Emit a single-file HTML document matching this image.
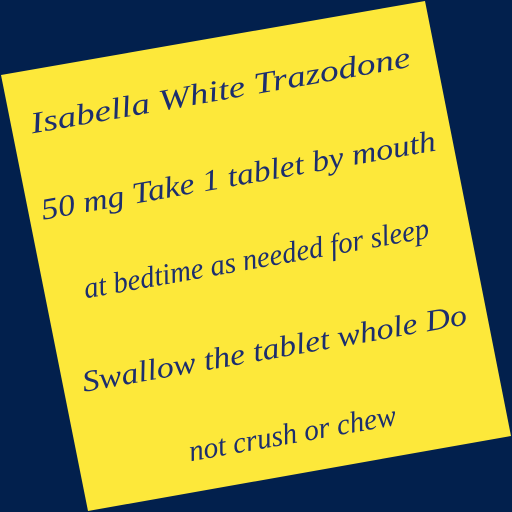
<!DOCTYPE html>
<html><head><style>html,body{margin:0;padding:0;background:#02204d;width:512px;height:512px;overflow:hidden}</style></head>
<body>
<svg width="512" height="512" viewBox="0 0 512 512" xmlns="http://www.w3.org/2000/svg">
<rect width="512" height="512" fill="#02204d"/>
<polygon points="1,75 425,1 511,436 88,511" fill="#fde83a"/>
<g font-family="'Liberation Serif', serif" font-style="italic" font-size="30" fill="#1c2e6e" text-anchor="middle">
<text x="0" y="0" transform="translate(222,100) rotate(-10)" textLength="385" lengthAdjust="spacingAndGlyphs">Isabella White Trazodone</text>
<text x="0" y="0" transform="translate(240,185) rotate(-10)" textLength="400" lengthAdjust="spacingAndGlyphs">50 mg Take 1 tablet by mouth</text>
<text x="0" y="0" transform="translate(258,268) rotate(-10)" textLength="350" lengthAdjust="spacingAndGlyphs">at bedtime as needed for sleep</text>
<text x="0" y="0" transform="translate(276,358) rotate(-10)" textLength="390" lengthAdjust="spacingAndGlyphs">Swallow the tablet whole Do</text>
<text x="0" y="0" transform="translate(294,443) rotate(-10)" textLength="210" lengthAdjust="spacingAndGlyphs">not crush or chew</text>
</g>
</svg>
</body></html>
